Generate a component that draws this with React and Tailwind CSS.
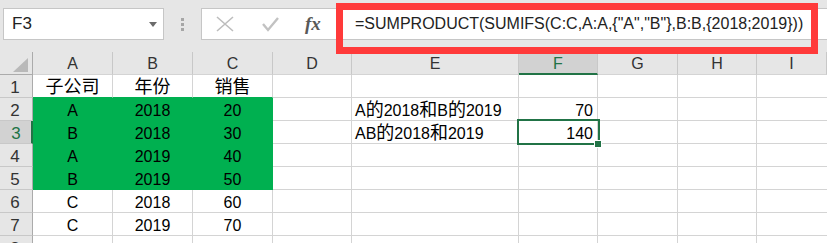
import React from 'react';

const colHeads = ['A', 'B', 'C', 'D', 'E', 'F', 'G', 'H', 'I'];

// row data: A, B, C, D, E, F
const rows = [
  ['子公司', '年份', '销售', '', '', ''],
  ['A', '2018', '20', '', 'A的2018和B的2019', '70'],
  ['B', '2018', '30', '', 'AB的2018和2019', '140'],
  ['A', '2019', '40', '', '', ''],
  ['B', '2019', '50', '', '', ''],
  ['C', '2018', '60', '', '', ''],
  ['C', '2019', '70', '', '', ''],
  ['', '', '', '', '', ''],
];

// CJK runs get a bigger size so they sit like the Excel font does
const Txt = ({ s }) =>
  s.split(/([\u4e00-\u9fff]+)/).map((p, i) =>
    /[\u4e00-\u9fff]/.test(p) ? (
      <span key={i} className="text-[18px] leading-[18px] font-['Noto_Sans_CJK_SC',sans-serif]">
        {p}
      </span>
    ) : (
      <React.Fragment key={i}>{p}</React.Fragment>
    )
  );

const isGreen = (r, c) => r >= 1 && r <= 4 && c <= 2;

const cellClass = (r, c) => {
  let cls = 'flex items-end leading-[18px] whitespace-nowrap border-r border-b ';
  if (c === 4) cls += 'justify-start pl-[3px] ';
  else if (c === 5) cls += 'justify-end pr-[4px] ';
  else cls += 'justify-center ';
  if (isGreen(r, c)) cls += 'bg-[#00b050] border-[#00b050] ';
  else if (r === 0 && c <= 2) cls += 'bg-white border-r-[#d4d4d4] border-b-[#00b050] ';
  else cls += 'bg-white border-[#d4d4d4] ';
  return cls;
};

const FormulaBar = () => (
  <div className="h-[52px] bg-[#e6e6e6] flex items-start pt-[8px]">
    {/* name box */}
    <div className="shrink-0 ml-[3px] w-[161px] h-[32px] bg-white border border-[#c6c6c6] flex items-center justify-between pl-[8px] pr-[6px]">
      <span className="text-[17px] leading-[20px] text-[#222]">F3</span>
      <svg width="8" height="5" viewBox="0 0 8 5">
        <polygon points="0,0 8,0 4,5" fill="#6b6b6b" />
      </svg>
    </div>
    {/* dots */}
    <div className="shrink-0 w-[37px] h-[32px] flex flex-col items-center justify-center gap-[2px]">
      <div className="w-[3px] h-[3px] bg-[#a6a6a6]" />
      <div className="w-[3px] h-[3px] bg-[#a6a6a6]" />
      <div className="w-[3px] h-[3px] bg-[#a6a6a6]" />
    </div>
    {/* formula box */}
    <div className="min-w-0 flex-1 h-[32px] bg-white border border-r-0 border-[#c6c6c6] flex items-center overflow-hidden">
      <div className="shrink-0 w-[134px] h-full flex items-center pl-[14px]">
        <svg width="18" height="16" viewBox="0 0 18 16">
          <path d="M1 1 L17 15 M17 1 L1 15" stroke="#bdbdbd" strokeWidth="1.6" fill="none" />
        </svg>
        <svg className="ml-[28px]" width="17" height="15" viewBox="0 0 17 15">
          <polyline points="1,7 6,13 16,1" stroke="#c2c2c2" strokeWidth="2.4" fill="none" />
        </svg>
        <span className="ml-[26px] font-['Liberation_Serif',serif] italic font-bold text-[19px] leading-[20px] text-[#595959]">
          fx
        </span>
      </div>
      <div className="shrink-0 pl-[19px] text-[16px] leading-[20px] text-[#222] whitespace-nowrap">
        =SUMPRODUCT(SUMIFS(C:C,A:A,{'{'}"A","B"{'}'},B:B,{'{'}2018;2019{'}'}))
      </div>
    </div>
  </div>
);

export default function App() {
  return (
    <div className="relative w-[827px] h-[243px] overflow-hidden bg-white text-black font-['Liberation_Sans','Noto_Sans_CJK_SC',sans-serif]">
      <FormulaBar />

      <div className="grid grid-cols-[33px_80px_80px_80px_79px_167px_79px_80px_79px_70px] auto-rows-[23px] text-[16px]">
        {/* corner */}
        <div className="bg-[#e6e6e6] border-r border-b border-[#ababab] flex items-end justify-end pr-[4px] pb-[2px]">
          <svg width="15" height="14" viewBox="0 0 15 14">
            <polygon points="15,0 15,14 0,14" fill="#b9b9b9" />
          </svg>
        </div>
        {colHeads.map((h) => (
          <div
            key={h}
            className={
              h === 'F'
                ? 'bg-[#d2d2d2] border-r border-[#c8c8c8] border-b-2 border-b-[#217346] text-[#217346] flex items-end justify-center leading-[18px]'
                : 'bg-[#e6e6e6] border-r border-b border-[#c8c8c8] border-b-[#d4d4d4] text-[#333] flex items-end justify-center leading-[18px] pb-[1px]'
            }
          >
            {h}
          </div>
        ))}

        {rows.map((row, r) => (
          <React.Fragment key={r}>
            <div
              className={
                r === 2
                  ? 'bg-[#d2d2d2] border-r-2 border-r-[#217346] border-b border-b-[#c8c8c8] text-[#217346] text-[17px] flex items-end justify-center leading-[18px] pl-[1px]'
                  : 'bg-[#e6e6e6] border-r border-b border-r-[#ababab] border-b-[#c8c8c8] text-[#333] text-[17px] flex items-end justify-center leading-[18px] pr-[2px]'
              }
            >
              {r + 1}
            </div>
            {row.map((v, c) => (
              <div key={c} className={cellClass(r, c)}>
                <span className="leading-[18px]">
                  <Txt s={v} />
                </span>
              </div>
            ))}
            <div className="bg-white border-r border-b border-[#d4d4d4]" />
            <div className="bg-white border-r border-b border-[#d4d4d4]" />
            <div className="bg-white border-b border-[#d4d4d4]" />
          </React.Fragment>
        ))}
      </div>

      {/* selected cell F3 */}
      <div className="absolute left-[517px] top-[119px] w-[83px] h-[26px] border-2 border-[#217346] pointer-events-none" />
      <div className="absolute left-[594px] top-[140px] w-[8px] h-[8px] bg-[#217346] border border-white" />

      {/* red annotation box */}
      <div className="absolute left-[336px] top-[3px] w-[482px] h-[51px] border-[7px] border-[#ff3a3a] pointer-events-none" />
    </div>
  );
}
